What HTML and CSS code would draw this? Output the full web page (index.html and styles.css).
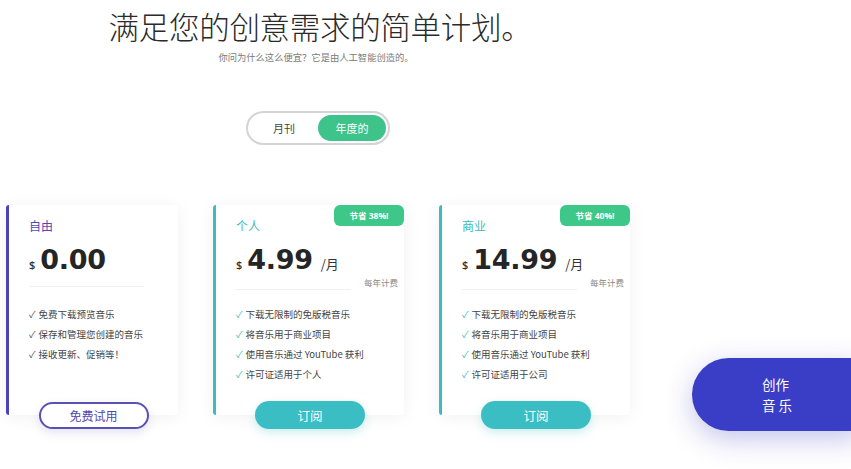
FILE: index.html
```html
<!DOCTYPE html>
<html lang="zh-CN">
<head>
    <meta charset="UTF-8">
    <meta name="viewport" content="width=device-width, initial-scale=1.0">
    <title>定价</title>
    <link rel="stylesheet" href="styles.css">
</head>
<body>
    <main class="plans">
      <header class="intro">
        <h1>满足您的创意需求的简单计划。</h1>
        <p class="sub">你问为什么这么便宜？它是由人工智能创造的。</p>
      </header>

      <div class="toggle">
        <span class="opt">月刊</span>
        <span class="opt on">年度的</span>
      </div>

      <section class="cards">
        <!-- 免费 -->
        <article class="card free">
          <h2 class="name">自由</h2>
          <div class="price"><span class="cur">$</span><span class="amt">0.00</span></div>
          <hr class="line">
          <ul class="feat">
            <li>免费下载预览音乐</li>
            <li>保存和管理您创建的音乐</li>
            <li>接收更新、促销等！</li>
          </ul>
          <button class="btn ghost">免费试用</button>
        </article>

        <!-- 个人 -->
        <article class="card paid">
          <span class="badge">节省 38%!</span>
          <h2 class="name">个人</h2>
          <div class="price"><span class="cur">$</span><span class="amt">4.99</span><span class="per">/月</span></div>
          <div class="bill">每年计费</div>
          <hr class="line">
          <ul class="feat">
            <li>下载无限制的免版税音乐</li>
            <li>将音乐用于商业项目</li>
            <li>使用音乐通过 YouTube 获利</li>
            <li>许可证适用于个人</li>
          </ul>
          <button class="btn solid">订阅</button>
        </article>

        <!-- 商业 -->
        <article class="card paid">
          <span class="badge">节省 40%!</span>
          <h2 class="name">商业</h2>
          <div class="price"><span class="cur">$</span><span class="amt">14.99</span><span class="per">/月</span></div>
          <div class="bill">每年计费</div>
          <hr class="line">
          <ul class="feat">
            <li>下载无限制的免版税音乐</li>
            <li>将音乐用于商业项目</li>
            <li>使用音乐通过 YouTube 获利</li>
            <li>许可证适用于公司</li>
          </ul>
          <button class="btn solid">订阅</button>
        </article>
      </section>
    </main>

    <a class="create" href="#">创作<br>音 乐</a>
</body>
</html>
```

FILE: styles.css
```css
* {
  box-sizing: border-box;
}
body {
  margin: 0;
  background: #fff;
  font-family: "Open Sans", "Noto Sans CJK SC", sans-serif;
  color: #333;
}
.plans {
  width: 632px;
  padding-bottom: 40px;
  display: flex;
  flex-direction: column;
  align-items: center;
}
.intro {
  text-align: center;
  padding-left: 8px;
}
.intro h1 {
  margin: 6px 0 0;
  font-family: "Noto Sans CJK SC", sans-serif;
  font-size: 30.5px;
  font-weight: 300;
  line-height: 40px;
  color: #2a2a2a;
  letter-spacing: -0.3px;
}
.sub {
  margin: 5px 0 0 -8px;
  font-size: 9.3px;
  line-height: 14px;
  color: #7a7a7a;
}

.toggle {
  margin: 46px 0 0 4px;
  width: 144px;
  height: 34px;
  border: 2px solid #d4d4d4;
  border-radius: 17px;
  display: flex;
  align-items: center;
  padding: 0 2px;
  font-family: "Noto Sans CJK SC", sans-serif;
  font-size: 11px;
}
.opt {
  flex: 1;
  text-align: center;
  color: #444;
}
.opt.on {
  flex: 0 0 68px;
  height: 26px;
  line-height: 26px;
  border-radius: 13px;
  background: #3ec48a;
  color: #fff;
}

.cards {
  align-self: flex-start;
  display: flex;
  gap: 35px;
  margin-top: 60px;
  padding-left: 6px;
}
.card {
  position: relative;
  width: 191px;
  height: 210px;
  background: #fff;
  border-left: 3px solid #3dbcc0;
  border-radius: 3px;
  box-shadow: 0 2px 18px rgba(0, 0, 0, 0.06);
  padding: 13px 0 0 20px;
  display: flex;
  flex-direction: column;
}
.card.free {
  width: 172px;
  border-left-color: #4a42b6;
}
.name {
  margin: 0;
  font-family: "Noto Sans CJK SC", sans-serif;
  font-size: 12px;
  font-weight: 400;
  line-height: 16px;
  color: #3dbcc0;
}
.free .name {
  color: #5048b0;
}
.price {
  display: flex;
  align-items: baseline;
  margin-top: 9px;
  height: 34px;
}
.cur {
  font-size: 11px;
  font-weight: 600;
  color: #333;
  margin-right: 5px;
}
.amt {
  font-family: "DejaVu Sans", sans-serif;
  font-size: 27px;
  font-weight: 700;
  line-height: 34px;
  color: #252525;
  letter-spacing: -0.3px;
}
.per {
  margin-left: 8px;
  font-family: "Noto Sans CJK SC", sans-serif;
  font-size: 13px;
  color: #333;
}
.bill {
  margin: 0 6px 0 0;
  text-align: right;
  font-family: "Noto Sans CJK SC", sans-serif;
  font-size: 8.5px;
  line-height: 10px;
  color: #888;
}
.line {
  width: 115px;
  margin: 9px 0 0;
  border: 0;
  border-top: 1px solid #f0f0f0;
}
.paid .line {
  margin-top: 2px;
}
.feat {
  list-style: none;
  margin: 17px 0 0;
  padding: 0;
  font-family: "Noto Sans CJK SC", sans-serif;
  font-size: 9.5px;
  line-height: 20px;
  color: #444;
}
.paid .feat {
  margin-top: 14px;
}
.feat li::before {
  content: "✓";
  margin-right: 3px;
  color: #555;
}
.paid .feat li::before {
  color: #3dbcc0;
}

.badge {
  position: absolute;
  top: 0;
  right: 0;
  width: 70px;
  height: 21px;
  line-height: 21px;
  text-align: center;
  background: #3dc88a;
  border-radius: 6px;
  color: #fff;
  font-size: 8.5px;
  font-weight: 700;
}

.btn {
  margin: auto 0 -14px -20px;
  align-self: center;
  width: 110px;
  height: 27px;
  border-radius: 14px;
  font-family: "Noto Sans CJK SC", sans-serif;
  font-size: 12px;
  cursor: pointer;
}
.btn.ghost {
  background: #fff;
  border: 2px solid #5a51b4;
  color: #5048b0;
  box-shadow: 0 4px 10px rgba(80, 72, 176, 0.15);
}
.btn.solid {
  height: 28px;
  background: #3bbec3;
  border: 0;
  color: #fff;
  font-size: 12.5px;
  box-shadow: 0 4px 10px rgba(59, 190, 195, 0.25);
}

.create {
  position: absolute;
  left: 692px;
  top: 358px;
  width: 170px;
  height: 73px;
  border-radius: 37px 0 0 37px;
  background: #3a3dc5;
  box-shadow: 0 8px 28px rgba(58, 61, 197, 0.3);
  color: #fff;
  text-decoration: none;
  font-family: "Noto Sans CJK SC", sans-serif;
  font-size: 13.5px;
  line-height: 21px;
  padding: 16px 0 0 70px;
}
```
